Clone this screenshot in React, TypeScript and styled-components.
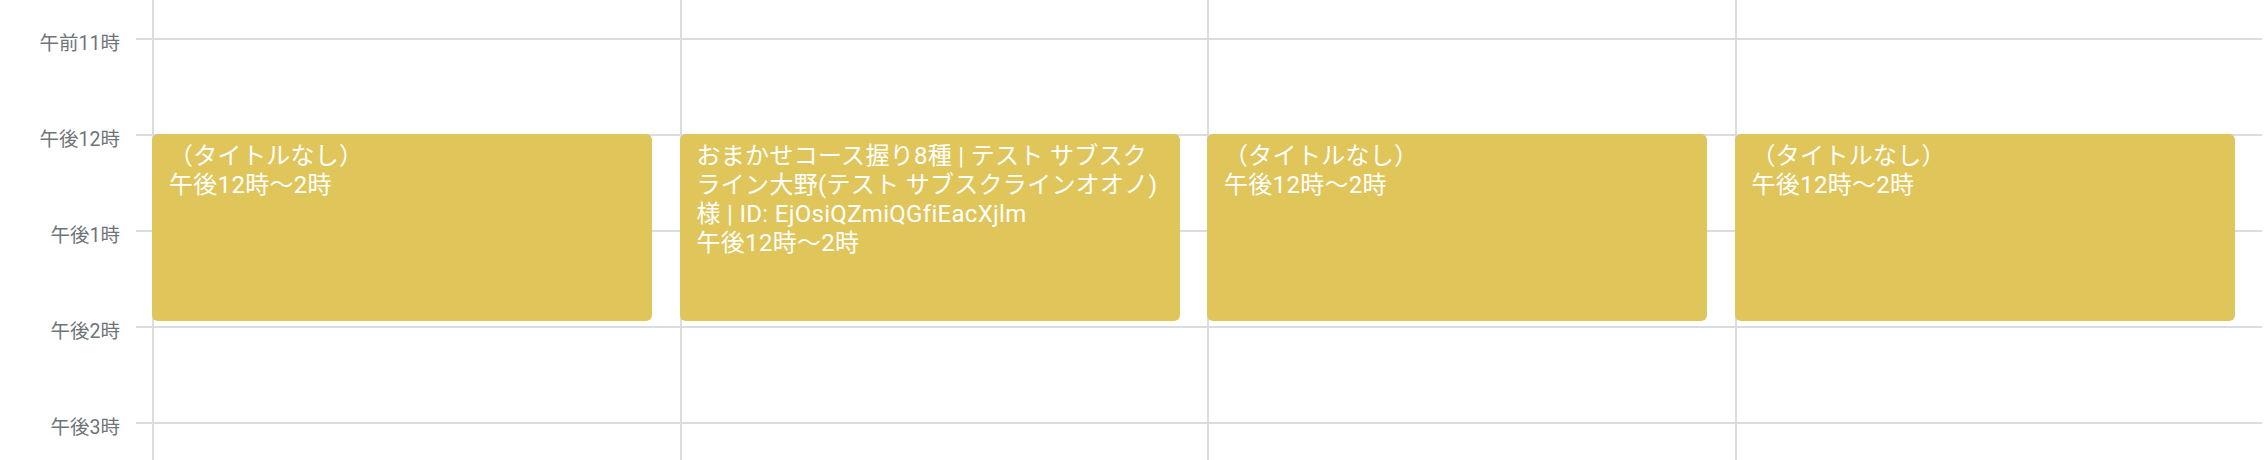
import React from "react";
import styled, { createGlobalStyle } from "styled-components";

const HOUR = 96;
const FIRST_LINE = 38; // y of the 午前11時 grid line
const START_HOUR = 11;
const LINE = "#dadce0";

const GlobalStyle = createGlobalStyle`
  html, body {
    margin: 0;
    padding: 0;
    background: #ffffff;
  }
  body {
    font-family: Roboto, "Noto Sans CJK JP", sans-serif;
  }
`;

const Calendar = styled.div`
  display: flex;
  width: calc(100vw - 4px);
  height: 460px;
  overflow: hidden;
  background: #ffffff;
`;

const Gutter = styled.div`
  flex: 0 0 136px;
  display: flex;
  flex-direction: column;
  margin-top: ${FIRST_LINE + 3.5 - HOUR / 2}px;
`;

const TimeLabel = styled.div`
  flex: 0 0 ${HOUR}px;
  display: flex;
  align-items: center;
  justify-content: flex-end;
  padding-right: 16px;
  font-size: 19.5px;
  color: #70757a;
  white-space: nowrap;
`;

const Grid = styled.div`
  flex: 1;
  display: flex;
  padding-left: 16px;
  background-image: linear-gradient(
    to bottom,
    ${LINE} 0,
    ${LINE} 2px,
    transparent 2px
  );
  background-size: 100% ${HOUR}px;
  background-position: 0 ${FIRST_LINE}px;
`;

const Days = styled.div`
  flex: 1;
  display: grid;
  grid-template-columns: repeat(4, 1fr);
`;

const DayColumn = styled.div`
  position: relative;
  border-left: 2px solid ${LINE};
`;

const EventCard = styled.div<{ $top: number; $height: number }>`
  position: absolute;
  left: -2px;
  top: ${(p) => p.$top}px;
  height: ${(p) => p.$height}px;
  width: calc(95% + 1px);
  box-sizing: border-box;
  padding: 8px 13px 8px 17px;
  background: #e0c55a;
  border-radius: 6px;
  color: #ffffff;
  font-family: Roboto, "Noto Sans CJK JP", sans-serif;
  font-size: 24px;
  line-height: 29px;
  letter-spacing: 0.3px;
  overflow: hidden;
`;

const EventTitle = styled.div``;

const EventTime = styled.div``;

const labels = ["午前11時", "午後12時", "午後1時", "午後2時", "午後3時"];

type Ev = { title: string; time: string; start: number; end: number };

const days: Ev[][] = [
  [{ title: "（タイトルなし）", time: "午後12時〜2時", start: 12, end: 14 }],
  [
    {
      title:
        "おまかせコース握り8種 | テスト サブスクライン大野(テスト サブスクラインオオノ)様 | ID: EjOsiQZmiQGfiEacXjlm",
      time: "午後12時〜2時",
      start: 12,
      end: 14,
    },
  ],
  [{ title: "（タイトルなし）", time: "午後12時〜2時", start: 12, end: 14 }],
  [{ title: "（タイトルなし）", time: "午後12時〜2時", start: 12, end: 14 }],
];

export default function App() {
  return (
    <>
      <GlobalStyle />
      <Calendar>
        <Gutter>
          {labels.map((l) => (
            <TimeLabel key={l}>{l}</TimeLabel>
          ))}
        </Gutter>
        <Grid>
          <Days>
            {days.map((evs, i) => (
              <DayColumn key={i}>
                {evs.map((ev, j) => (
                  <EventCard
                    key={j}
                    $top={FIRST_LINE + (ev.start - START_HOUR) * HOUR}
                    $height={(ev.end - ev.start) * HOUR - 5}
                  >
                    <EventTitle>{ev.title}</EventTitle>
                    <EventTime>{ev.time}</EventTime>
                  </EventCard>
                ))}
              </DayColumn>
            ))}
          </Days>
        </Grid>
      </Calendar>
    </>
  );
}
